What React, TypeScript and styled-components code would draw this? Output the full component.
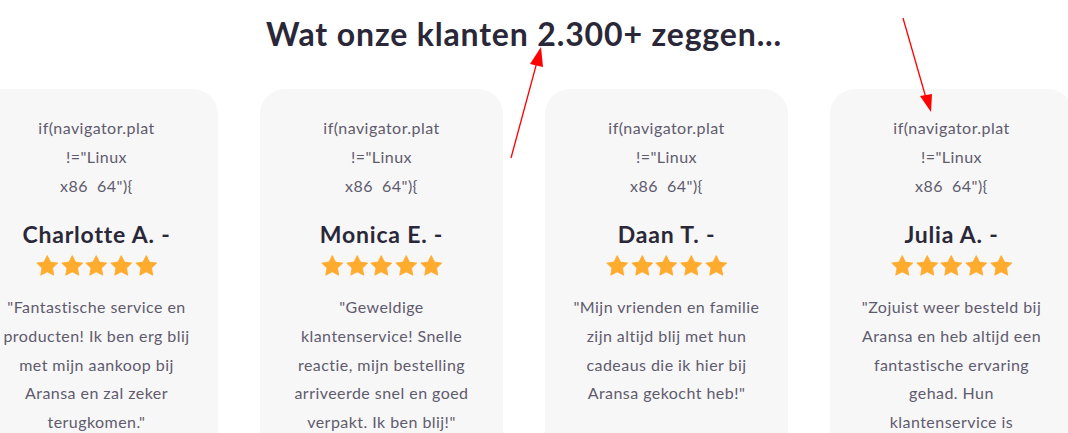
import styled, { createGlobalStyle } from "styled-components";

const GlobalStyle = createGlobalStyle`
  html, body {
    margin: 0;
    padding: 0;
    background: #ffffff;
  }
  body {
    font-family: Lato, "Noto Sans", "Liberation Sans", sans-serif;
    overflow: hidden;
  }
`

type Review = {
  name: string
  lines: string[]
}

const reviews: Review[] = [
  {
    name: "Charlotte A. -",
    lines: [
      "\"Fantastische service en",
      "producten! Ik ben erg blij",
      "met mijn aankoop bij",
      "Aransa en zal zeker",
      "terugkomen.\"",
    ],
  },
  {
    name: "Monica E. -",
    lines: [
      "\"Geweldige",
      "klantenservice! Snelle",
      "reactie, mijn bestelling",
      "arriveerde snel en goed",
      "verpakt. Ik ben blij!\"",
    ],
  },
  {
    name: "Daan T. -",
    lines: [
      "\"Mijn vrienden en familie",
      "zijn altijd blij met hun",
      "cadeaus die ik hier bij",
      "Aransa gekocht heb!\"",
    ],
  },
  {
    name: "Julia A. -",
    lines: [
      "\"Zojuist weer besteld bij",
      "Aransa en heb altijd een",
      "fantastische ervaring",
      "gehad. Hun",
      "klantenservice is",
    ],
  },
]

const codeLines = ["if(navigator.plat", "!=\"Linux", "x86  64\"){"]

const Page = styled.div`
  position: relative;
  width: 1068px;
  height: 433px;
  overflow: hidden;
`

const Title = styled.h2`
  margin: 14px 0 0;
  padding-right: 20px;
  font-size: 32px;
  line-height: 40px;
  font-weight: 700;
  color: #2a2838;
  text-align: center;
  letter-spacing: 0.85px;
`

const Slider = styled.div`
  margin-top: 35px;
  overflow: hidden;
`

const Track = styled.div`
  display: flex;
  gap: 42px;
  transform: translateX(-25px);
`

const Card = styled.article`
  flex: 0 0 243px;
  height: 380px;
  box-sizing: border-box;
  padding: 25px 6px 0;
  background: #f7f7f7;
  border-radius: 25px 25px 0 0;
  display: flex;
  flex-direction: column;
  align-items: center;
  text-align: center;
`

const TextLine = styled.span<{ $lh?: number }>`
  display: block;
  font-size: 16px;
  line-height: ${(p) => p.$lh ?? 28.8}px;
  letter-spacing: 0.45px;
  color: #5f5b6e;
  white-space: pre;
`

const Name = styled.h3`
  margin: 19px 0 0;
  font-size: 23px;
  line-height: 30px;
  font-weight: 700;
  letter-spacing: 0.8px;
  color: #2a2838;
`

const Stars = styled.div`
  display: flex;
  gap: 0.2px;
  margin-top: 5px;
  height: 24px;
`

const Quote = styled.p`
  margin: 15px 0 0;
`

const Annotations = styled.svg`
  position: absolute;
  left: 0;
  top: 0;
  pointer-events: none;
`

const Star = () => (
  <svg width="24.5" height="24" viewBox="0 0 24 24" preserveAspectRatio="none">
    <path
      d="M12 1.6l3.2 6.5 7.1 1-5.15 5 1.22 7.1L12 17.85 5.63 21.2l1.22-7.1-5.15-5 7.1-1z"
      fill="#ffab2e"
      stroke="#ffab2e"
      strokeWidth="0.8"
      strokeLinejoin="round"
    />
  </svg>
)

const ReviewCard = ({ review }: { review: Review }) => (
  <Card>
    <div>
      {codeLines.map((line) => (
        <TextLine key={line}>{line}</TextLine>
      ))}
    </div>
    <Name>{review.name}</Name>
    <Stars>
      {[0, 1, 2, 3, 4].map((i) => (
        <Star key={i} />
      ))}
    </Stars>
    <Quote>
      {review.lines.map((line) => (
        <TextLine key={line} $lh={28.6}>
          {line}
        </TextLine>
      ))}
    </Quote>
  </Card>
)

const App = () => {
  return (
    <>
      <GlobalStyle />
      <Page>
        <Title>Wat onze klanten 2.300+ zeggen...</Title>
        <Slider>
          <Track>
            {reviews.map((review) => (
              <ReviewCard key={review.name} review={review} />
            ))}
          </Track>
        </Slider>
        <Annotations width="1068" height="433" viewBox="0 0 1068 433">
          <line x1="511" y1="158" x2="537" y2="62" stroke="#ff0000" strokeWidth="1.3" />
          <polygon points="541,47 530,64 543,67" fill="#ff0000" />
          <line x1="903" y1="18" x2="926" y2="98" stroke="#ff0000" strokeWidth="1.3" />
          <polygon points="931,112 920,96 932,94" fill="#ff0000" />
        </Annotations>
      </Page>
    </>
  )
}

export default App
